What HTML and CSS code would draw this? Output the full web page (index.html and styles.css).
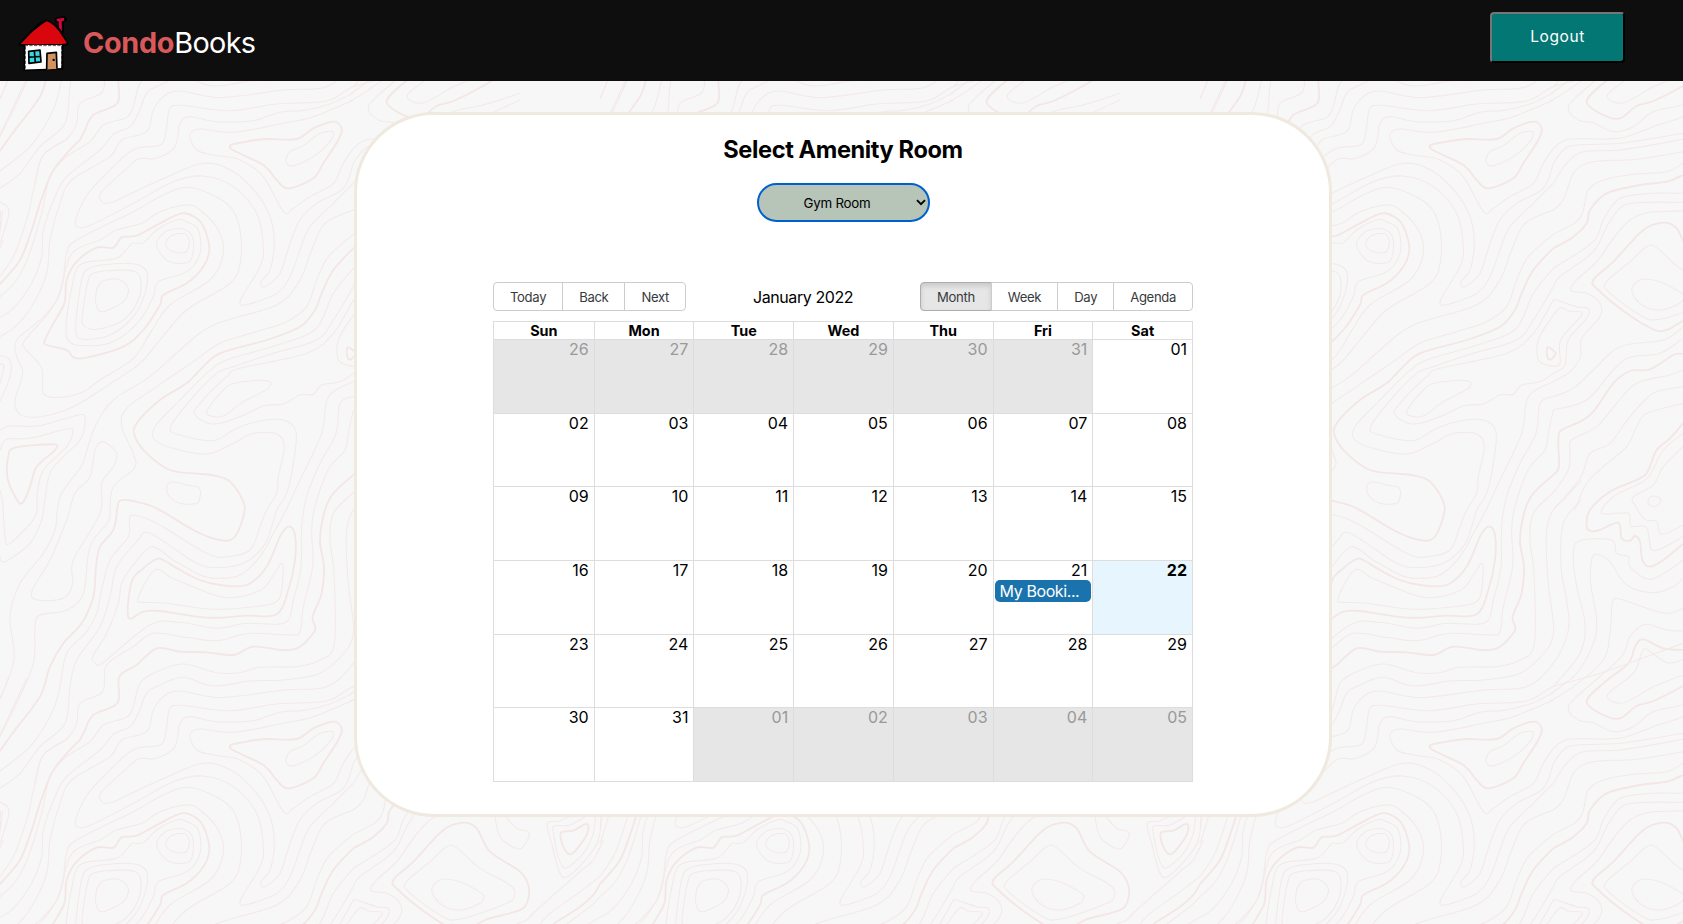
FILE: index.html
```html
<!DOCTYPE html>
<html lang="en">
<head>
<meta charset="utf-8">
<title>CondoBooks</title>
<link rel="stylesheet" href="styles.css">
</head>
<body>
<svg class="topography" width="1683" height="924" aria-hidden="true"><g id="contours"></g></svg>

<header class="navbar">
  <a class="brand">
    <svg class="brand-logo" width="54" height="58" viewBox="0 0 162 174">
      <g transform="translate(-1 4) scale(1 1.02)">
      <path d="M118 12l24-5 7 9-10 6 1 31-13-8-1-24-9 1z" fill="#000" stroke="#000" stroke-width="5" stroke-linejoin="round"/>
      <path d="M120 13l22-2 1 7-8 3 1 28-9-8-1-20-6-2z" fill="#d4063c"/>
      <path d="M8 89L42 52Q70 24 89 18Q110 24 128 45L153 87L137 92L137 160L24 164L24 92Z" fill="#000" stroke="#000" stroke-width="6" stroke-linejoin="round"/>
      <path d="M26 90H135L134 158 90 160 25 162Z" fill="#fff"/>
      <path d="M24 92H136M26 94V160M135 94V158" stroke="#000" stroke-width="2" stroke-dasharray="10 4" fill="none"/>
      <path d="M12 87L44 54Q70 32 90 20Q108 26 126 48L151 85Q130 89 108 87L60 89Z" fill="#d9060d"/>
      <path d="M36 109L70 105 73 140 37 144Z" fill="#35d8e3" stroke="#000" stroke-width="5" stroke-linejoin="round"/>
      <path d="M53 108L56 141M37 126L72 124" stroke="#000" stroke-width="5" fill="none"/>
      <path d="M90 162L91 115 119 112 121 160" fill="#d1935f" stroke="#000" stroke-width="5" stroke-linejoin="round"/>
      <circle cx="111" cy="134" r="3.5" fill="#000"/>
      </g>
    </svg>
    <span class="brand-name"><b>Condo</b>Books</span>
  </a>
  <button class="logout">Logout</button>
</header>

<main class="card">
  <h2 class="card-title">Select Amenity Room</h2>
  <div class="room-picker">
    <span>Gym Room</span>
    <svg class="chevron" width="10" height="7" viewBox="0 0 10 7"><path d="M1 1.2L5 5.2L9 1.2" fill="none" stroke="#000" stroke-width="1.9"/></svg>
  </div>

  <section class="calendar">
    <div class="toolbar">
      <div class="btn-group"><button>Today</button><button>Back</button><button>Next</button></div>
      <div class="toolbar-label">January 2022</div>
      <div class="btn-group"><button class="active">Month</button><button>Week</button><button>Day</button><button>Agenda</button></div>
    </div>
    <div class="month">
      <div class="week-head"><div>Sun</div><div>Mon</div><div>Tue</div><div>Wed</div><div>Thu</div><div>Fri</div><div>Sat</div></div>
      <div class="week"><div class="off">26</div><div class="off">27</div><div class="off">28</div><div class="off">29</div><div class="off">30</div><div class="off">31</div><div>01</div></div>
      <div class="week"><div>02</div><div>03</div><div>04</div><div>05</div><div>06</div><div>07</div><div>08</div></div>
      <div class="week"><div>09</div><div>10</div><div>11</div><div>12</div><div>13</div><div>14</div><div>15</div></div>
      <div class="week"><div>16</div><div>17</div><div>18</div><div>19</div><div>20</div><div>21<span class="event">My Booki...</span></div><div class="today">22</div></div>
      <div class="week"><div>23</div><div>24</div><div>25</div><div>26</div><div>27</div><div>28</div><div>29</div></div>
      <div class="week"><div>30</div><div>31</div><div class="off">01</div><div class="off">02</div><div class="off">03</div><div class="off">04</div><div class="off">05</div></div>
    </div>
  </section>
</main>
<script src="contours.js"></script>
</body>
</html>
```
FILE: styles.css
```css
* { box-sizing: border-box; }

body {
  margin: 0;
  height: 924px;
  overflow: hidden;
  background: #f7f7f7;
  color: #000;
  font-family: Inter, "Liberation Sans", sans-serif;
  font-size: 16px;
}

.topography { position: absolute; left: 0; top: 0; z-index: -1; }
.contour { fill: none; stroke: #f4e9e9; stroke-width: 3.2; }
.contour-index { stroke: #f3e6e5; stroke-width: 5.5; }

.navbar {
  display: flex;
  justify-content: space-between;
  align-items: flex-start;
  height: 81px;
  padding: 12px 58px 0 17px;
  background: #0e0e0e;
}

.brand { display: flex; gap: 12px; padding-top: 1px; }
.brand-logo { overflow: visible; }
.brand-name { color: #fff; font-size: 28.8px; line-height: 35px; padding-top: 12px; letter-spacing: -.65px; }
.brand-name b { color: #d9595b; letter-spacing: -.3px; }

.logout {
  width: 135px;
  height: 51px;
  padding: 0 0 3px;
  border: 2px outset #767676;
  border-color: #767676 #212121 #212121 #767676;
  border-radius: 4px;
  background: #027773;
  color: #fff;
  font: 15.5px Inter, sans-serif;
  letter-spacing: .6px;
}

.card {
  display: flex;
  flex-direction: column;
  align-items: center;
  width: 978px;
  height: 705px;
  margin: 31px 0 0 354px;
  padding-top: 20px;
  border: 3px solid #f0e9df;
  border-radius: 80px;
  background: #fff;
}

.card-title { margin: 0; font-size: 23.6px; line-height: 29px; font-weight: 700; letter-spacing: -.4px; }

.room-picker {
  display: flex;
  align-items: center;
  justify-content: center;
  gap: 46px;
  width: 173px;
  height: 39px;
  margin: 19px 0 0 1px;
  padding-left: 43px;
  border: 2px solid #0060d0;
  border-radius: 20px;
  background: #b7c4b8;
  font-size: 13.333px;
  letter-spacing: -.25px;
}

.calendar {
  display: flex;
  flex-direction: column;
  width: 700px;
  height: 500px;
  margin-top: 60px;
}

.toolbar { display: flex; align-items: center; margin-bottom: 10px; }
.toolbar-label { flex: 1; text-align: center; letter-spacing: -.42px; }
.btn-group { display: flex; }
.btn-group button {
  height: 29px;
  margin: 0;
  padding: 0 16px;
  border: 1px solid #ccc;
  background: #fff;
  color: #373a3c;
  font: 13.1px Inter, sans-serif;
  letter-spacing: -.33px;
}
.btn-group button + button { margin-left: -1px; }
.btn-group button:first-child { border-radius: 4px 0 0 4px; }
.btn-group button:last-child { border-radius: 0 4px 4px 0; }
.btn-group .active {
  border-color: #adadad;
  background: #e6e6e6;
  box-shadow: inset 0 3px 5px rgba(0, 0, 0, .125);
}

.month { display: flex; flex: 1; flex-direction: column; border: 1px solid #ddd; }
.week-head, .week { display: grid; grid-template-columns: repeat(7, minmax(0, 1fr)); }
.week-head > div {
  height: 18px;
  font-size: 14.4px;
  font-weight: 700;
  line-height: 18px;
  text-align: center;
  border-bottom: 1px solid #ddd;
}
.week { flex: 1 1 0; }
.week + .week { flex-basis: 1px; border-top: 1px solid #ddd; }
.week > div { padding-right: 5px; line-height: 19px; text-align: right; }
.week > div + div, .week-head > div + div { border-left: 1px solid #ddd; }
.week .off { background: #e6e6e6; color: #999; }
.week .today { background: #e7f5ff; font-weight: 700; }

.event {
  display: block;
  margin: 0 -4px 0 1px;
  padding: 0 5px;
  height: 22px;
  overflow: hidden;
  border-radius: 5px;
  background: #1a73ac;
  color: #fff;
  line-height: 22px;
  letter-spacing: -.4px;
  text-align: left;
  white-space: nowrap;
}
```
FILE: contours.js
```js
// Contour lines of the topographic backdrop. Units are thirds of a pixel;
// the pattern repeats every 1800 units. "*" marks a heavier index line.
const sheets = [
  { dx: 0, dy: 0, lines: [
    "27,-10 0,57",
    "80,-5 40,80 0,165",
    "205,175 130,225 105,310 85,400 60,480 40,530 0,590",
    "*240,180 200,220 155,280 120,370 95,450 60,540 0,612",
    "560,375 480,395 425,430 350,450 300,480 235,505 205,540 180,640 145,700 75,780 75,805 125,865 130,940 180,952 250,935 300,900 400,835 450,760 510,675 630,600 670,520 655,450 600,390 560,375",
    "575,323 500,340 400,395 230,480 200,520 190,590 170,660 120,720 50,780 50,830 68,880 45,960 60,1003 120,1010 220,980 340,905 420,850 480,780 560,690 690,610 722,540 718,440 680,370 575,323",
    "*545,400 480,430 410,467 365,472 340,503 290,503 230,545 200,600 193,670 160,730 135,780 140,795 200,810 220,832 260,833 370,800 430,750 480,675 490,645 560,610 610,560 628,510 615,450 590,415 545,400",
    "530,420 470,450 430,488 395,492 350,535 250,550 220,600 200,770 270,797 350,780 420,720 460,650 475,605 560,575 600,520 595,450 560,425 530,420",
    "535,445 490,460 470,495 500,540 550,550 575,535 580,480 565,455 535,445",
    "540,460 510,470 497,495 520,515 555,517 568,490 560,465 540,460",
    "260,570 300,556 400,551 440,575 435,640 400,710 330,765 250,778 228,760 230,700 245,600 260,570",
    "280,580 320,572 400,573 422,600 415,660 370,720 290,748 250,735 248,700 265,600 280,580",
    "320,600 355,598 385,625 370,665 310,695 290,680 288,640 300,610 320,600",
    "1449,-110 1200,-20 1060,20 980,63 830,72 690,92 540,76 508,90 497,160 480,195 405,207 350,250 265,340 230,410 230,440 270,436 400,370 520,305 610,288 700,320 770,400 790,500 780,560 722,660 740,674 830,640 870,590 900,510 930,440 1000,370 1060,310",
    "1060,38 1000,68 920,90 840,97 760,122 650,125 570,110 540,130 525,200 470,235 415,237 370,275 305,335 303,362 340,365 480,300 610,250 700,275 770,340 810,410 823,490 810,570 783,605 795,620 840,580 870,490 900,420 950,370 1030,325 1060,250",
    "1060,60 940,110 850,130 700,157 600,147 570,165 590,210 640,225 720,240 790,290 850,395 880,385 930,350 1000,310 1030,250 1060,205",
    "1060,390 975,430 935,510 900,600 830,675 640,735 540,810 450,890 340,960 285,1040 255,1130 240,1165 185,1240 172,1290 165,1350 130,1420 60,1510 30,1610 42,1740 0,1857",
    "1060,463 985,530 950,600 920,680 860,725 770,755 660,790 580,845 470,920 380,985 365,1040 400,1120 403,1165 340,1220 330,1290 325,1325 270,1400 250,1540 200,1590 120,1605 105,1640 100,1750 50,1870 0,1970",
    "*1060,505 1000,570 965,640 945,690 900,740 800,780 660,820 600,870 560,910 480,960 410,1030 405,1070 440,1120 510,1170 580,1180 640,1186 690,1205 730,1265 730,1310 700,1375 650,1378 580,1350 470,1285 400,1263 360,1262 352,1285 340,1350 300,1400 288,1460 280,1550 245,1630 190,1690 150,1760 120,1850 45,1950 0,2013",
    "1060,565 1000,640 970,710 930,760 800,805 680,840 620,880 540,960 465,1040 465,1080 520,1105 620,1122 700,1090 760,1060 830,1062 853,1100 835,1190 830,1240 800,1290 780,1340 750,1410 680,1430 620,1420 470,1330 400,1305 388,1320 385,1370 330,1440 305,1530 290,1600 260,1655 200,1720 180,1820 155,1900 90,2000 0,2073",
    "1060,620 1000,720 950,780 820,820 700,860 650,880 580,950 512,1040 540,1065 640,1082 700,1050 770,1025 850,1020 888,1055 880,1150 860,1240 830,1290 815,1340 790,1400 730,1450 650,1463 590,1450 500,1390 440,1357 410,1385 350,1460 330,1550 300,1640 230,1740 210,1820 195,1930 120,2000 60,2080 0,2125",
    "1060,660 1000,760 920,820 720,865 680,890 600,970 585,1005 640,1032 720,1010 790,978 850,972 900,945 940,943 965,915 1020,905 1060,880",
    "710,908 800,902 805,925 730,965 670,1008 625,1005 625,985 670,930 710,908",
    "520,1205 560,1215 598,1225 598,1260 585,1271 540,1270 505,1245 502,1215 520,1205",
    "*690,203 740,185 800,177 890,177 940,145 1000,125 1025,145 1015,180 970,250 940,295 865,325 830,300 790,255 690,203",
    "870,215 910,197 960,160 1000,157 985,190 940,230 880,257 858,245 870,215",
    "0,367 22,380 25,410 0,490", "0,390 3,420 0,445",
    "0,825 30,840 30,890 0,965", "0,852 12,860 0,910",
    "*45,1103 160,1093 165,1110 110,1160 90,1220 65,1271 40,1240 22,1190 25,1130 45,1103",
    "0,1110 20,1078 90,1075 200,1047 218,1055 200,1100 130,1170 112,1240 105,1310 30,1390 15,1370 8,1270 0,1230",
    "0,1050 30,1038 120,1037 240,1004 255,1025 240,1080 190,1130 150,1180 133,1270 125,1320 90,1390 15,1445 0,1430",
    "310,1085 350,1120 340,1160 305,1210 300,1300 220,1440 218,1510 190,1555 110,1560 97,1530 150,1440 200,1320 225,1240 270,1190 285,1110 310,1085",
    "1060,905 985,950 965,1060 900,1200 858,1290 820,1360 780,1430 720,1485 650,1495 600,1485 520,1440 455,1400 400,1455 365,1510 355,1570 320,1660 278,1730 285,1748 310,1747 450,1635 540,1627 650,1645 740,1630 855,1628 880,1560 903,1460 905,1340 920,1250 960,1150 1008,1060 1020,970 1060,950",
    "1060,990 1045,1060 1035,1110 990,1160 960,1230 940,1300 935,1360 938,1460 910,1580 900,1655 870,1665 750,1660 650,1682 560,1672 460,1660 400,1700 320,1755 308,1835 240,1870 230,1930 200,1977 130,2025 105,2110",
    "*1060,1185 1000,1240 975,1290 960,1380 972,1460 965,1540 938,1610 945,1650 900,1700 850,1710 760,1700 700,1725 620,1717 540,1715 470,1705 410,1755 358,1790 353,1868 280,1905 255,1950 240,1980",
    "1060,1238 1000,1300 990,1380 1002,1480 1003,1690 960,1740 890,1760 780,1762 720,1778 650,1778 550,1752 470,1775 420,1810 400,1880 380,1912 310,1935 270,1985 200,2030 150,2090 125,2200 85,2330 50,2400 0,2450",
    "1145,1200 1090,1260 1060,1290 1040,1350 1043,1490 1058,1610 1060,1660 1040,1710 960,1780 850,1800 750,1803 640,1818 550,1792 480,1815 440,1840 415,1900 390,1940 340,1963 300,2010 200,2090 165,2150 130,2250 125,2330 95,2410 40,2485 0,2512",
    "1145,1260 1090,1330 1083,1460 1100,1560 1105,1650 1060,1750 980,1820 850,1830 660,1853 540,1833 490,1850 460,1890 440,1955 365,1980 330,2030 215,2100 180,2170 150,2280 140,2380 95,2480 45,2540 0,2570",
    "*470,1437 430,1465 395,1505 385,1612 430,1595 480,1593 620,1613 740,1607 830,1603 865,1530 885,1440 884,1360 865,1340 840,1370 800,1460 740,1515 660,1515 600,1500 540,1470 490,1440 470,1437",
    "470,1468 440,1500 413,1560 430,1567 500,1570 640,1588 780,1578 830,1565 845,1530 848,1450 820,1485 790,1525 720,1550 650,1547 530,1500 510,1490 470,1468"
  ]},
  { dx: 360, dy: 0, lines: [
    "700,205 745,178 860,177 920,170 1000,140 1089,110 1200,60",
    "700,250 730,210 770,195 900,190 1089,160",
    "700,310 740,250 790,215 900,210 1089,178",
    "700,390 730,360 760,280 800,250 850,242 950,238 1089,215",
    "700,463 770,425 790,390 805,330 850,300 940,283 1040,275 1089,250",
    "*700,505 760,470 800,430 810,390 860,340 960,315 1040,305 1089,285",
    "700,565 820,485 850,420 900,355 1000,340 1089,340",
    "700,620 720,590 820,515 860,440 900,385 950,368 1089,367",
    "700,905 750,875 782,830 785,775 840,710 840,670 800,640 753,632 770,600 830,545 880,475 930,420 990,397 1089,393",
    "700,660 710,660 770,680 805,685 800,715 745,780 735,855 700,880",
    "700,950 760,925 820,870 900,800 1030,780 1089,740",
    "700,990 800,960 880,870 930,832 1020,820 1089,775",
    "720,683 690,720 655,780 655,840 690,857 720,850 722,780 785,705 770,695 745,693 720,683",
    "*683,802 700,812 707,822 690,839 681,825 683,802",
    "*1089,822 1060,825 990,868 930,873 880,910 820,995 780,1025 725,1050 715,1080 717,1160 700,1185",
    "1089,870 1050,885 950,910 890,970 830,1040 755,1080 750,1110 745,1170 700,1238",
    "1089,920 1000,940 930,1010 870,1090 810,1120 780,1195 700,1290",
    "1089,970 980,1000 950,1040 920,1100 850,1160 800,1210 765,1290",
    "*1089,1030 1050,1075 1010,1110 985,1170 960,1195 870,1235 810,1290 800,1340 815,1354 840,1350 895,1328 905,1375 930,1382 945,1368 960,1385 967,1440 990,1460 1030,1440 1089,1392",
    "1089,1060 1030,1110 990,1185 960,1210 880,1250 845,1300 925,1300 932,1338 980,1343 1000,1412 1089,1370",
    "1089,1100 1030,1160 1000,1215 940,1250 945,1275 975,1318 1010,1325 1025,1363 1089,1335",
    "1000,1248 1023,1258 1010,1278 988,1275 985,1258 1000,1248",
    "*1100,718 1040,750 1000,748 920,700 835,630 820,600 880,545 970,450 1030,428 1070,445 1110,515 1200,575 1227,625 1215,680 1170,700 1100,718",
    "980,500 930,545 860,605 865,635 960,705 1020,718 1160,670 1183,645 1170,615 1080,565 1010,503 980,500",
    "960,600 1010,602 1070,630 1092,650 1070,675 1010,690 960,670 935,630 960,600"
  ]},
  { dx: 360, dy: 1260, lines: [
    "1089,180 1040,215 985,238 930,200 925,170 890,160 875,120 780,122 760,160 770,260 795,370 780,460 700,560",
    "1089,235 1060,260 1000,278 920,255 870,185 830,163 815,180 812,250 830,360 820,430 770,520 690,583",
    "1089,325 1040,340 960,318 900,298 878,305 870,400 850,480 760,560 690,604",
    "*1150,520 1089,558 1000,603 950,618 900,655 850,645 800,605 850,550 925,490 945,440 970,418 1030,445 1089,450",
    "1150,500 1089,525 1000,560 950,590 900,610 862,585 940,520 965,460 980,448 1040,488 1089,480",
    "1200,580 1089,615 1000,635 940,680 880,695 820,668 780,662 745,630 770,590 900,475 930,410 975,373 1040,390 1089,393"
  ]},
  { dx: 1380, dy: 300, lines: [
    "102,90 120,170 175,207 200,185 205,155 170,145 125,95",
    "*303,158 340,152 380,132 380,165 335,222 310,200 303,158",
    "400,95 330,135 282,138 282,170 300,245 320,263 370,220 400,160 408,90",
    "345,100 300,122 262,130 275,190 300,280 325,288 380,235 415,180 428,90",
    "430,180 400,240 360,275 230,390 200,420 170,432",
    "420,290 340,350 270,400 240,432",
    "*420,312 400,345 360,380 280,432",
    "420,350 390,380 320,432", "420,412 385,432"
  ]}
];

// Catmull-Rom spline through the points, written as cubic segments.
function smooth(points) {
  const last = points.length - 1;
  const closed = points[0].join() === points[last].join();
  let d = "M" + points[0];
  for (let i = 0; i < last; i++) {
    const a = points[i - 1] || (closed ? points[last - 1] : points[i]);
    const b = points[i], c = points[i + 1];
    const e = points[i + 2] || (closed ? points[1] : c);
    d += `C${b[0] + (c[0] - a[0]) / 6} ${b[1] + (c[1] - a[1]) / 6} ${c[0] - (e[0] - b[0]) / 6} ${c[1] - (e[1] - b[1]) / 6} ${c[0]} ${c[1]}`;
  }
  return d;
}

let tile = "";
for (const sheet of sheets) {
  for (const line of sheet.lines) {
    const heavy = line[0] === "*";
    const points = line.replace("*", "").split(" ").map(p => {
      const [x, y] = p.split(",").map(Number);
      return [x + sheet.dx, y + sheet.dy];
    });
    tile += `<path class="contour${heavy ? " contour-index" : ""}" d="${smooth(points)}"/>`;
  }
}
let field = "";
for (const ox of [-1800, 0, 1800, 3600])
  for (const oy of [-1800, 0, 1800])
    field += `<g transform="translate(0 80) scale(.33333) translate(${ox} ${oy})">${tile}</g>`;
document.getElementById("contours").innerHTML = field;
```
